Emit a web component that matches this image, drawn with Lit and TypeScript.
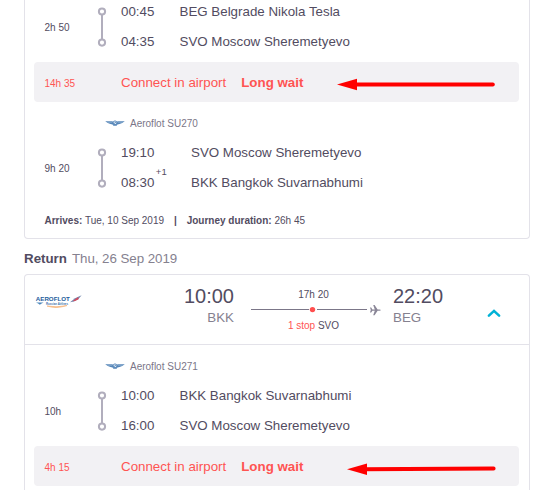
import { LitElement, html, css, svg, nothing } from "lit";
import { customElement, property } from "lit/decorators.js";

interface Stop {
  time: string;
  place: string;
  plus?: string;
}

const wings = html`<svg class="wings" width="20" height="8" viewBox="0 0 20 8">
  <path d="M0.2 2.2 L7.2 2.3 L8.6 3 L11.4 3 L12.8 2.3 L19.8 2.2 L17.2 3.9 L14.6 5 L12.4 5.6 L11.6 6.8 L8.4 6.8 L7.6 5.6 L5.4 5 L2.8 3.9 Z" fill="#5585b8" />
  <path d="M2.5 3.3H7.4M12.6 3.3H17.5" stroke="#a9c4df" stroke-width=".5" />
  <circle cx="10" cy="3.8" r="1.9" fill="#dfeaf4" stroke="#5585b8" stroke-width=".9" />
  <path d="M9 4.8L11 2.8" stroke="#3d72aa" stroke-width=".8" />
</svg>`;

@customElement("flight-segment")
export class FlightSegment extends LitElement {
  @property() duration = "";
  @property() flight = "";
  @property({ attribute: false }) stops: Stop[] = [];
  @property({ type: Boolean, reflect: true }) wide = false;

  static styles = css`
    :host { display: block; }
    .airline { display: flex; align-items: center; height: 20px; margin-bottom: 5px; padding-left: 80px; gap: 5px; font-size: 10px; color: #7b7688; }
    .wings { display: block; }
    .body { display: grid; grid-template-columns: 52px 25px 1fr; padding-left: 19px; height: 60px; align-items: center; color: #524c61; }
    .dur { font-size: 10px; padding: 1px 0 0 0.5px; }
    .track { display: block; }
    .row { display: grid; grid-template-columns: 58.5px 1fr; align-items: center; height: 30px; line-height: 30px; white-space: nowrap; }
    :host([wide]) .row { grid-template-columns: 70px 1fr; }
    .time { display: flex; }
    .plus { font-size: 9.5px; line-height: 12px; margin: -2px 0 0 1.5px; }
  `;

  render() {
    return html`
      ${this.flight ? html`<div class="airline">${wings}<span>${this.flight}</span></div>` : nothing}
      <div class="body">
        <span class="dur">${this.duration}</span>
        <svg class="track" width="14" height="46" viewBox="0 0 14 46">
          <g fill="#fff" stroke="#b1aebd" stroke-width="2">
            <path d="M6 10V36" />
            <circle cx="6" cy="7.5" r="3.1" />
            <circle cx="6" cy="38.6" r="3.1" />
          </g>
        </svg>
        <div>
          ${this.stops.map(
            (s) => html`<div class="row">
              <span class="time">${s.time}${s.plus ? html`<span class="plus">${s.plus}</span>` : nothing}</span>
              <span>${s.place}</span>
            </div>`
          )}
        </div>
      </div>
    `;
  }
}

@customElement("wait-bar")
export class WaitBar extends LitElement {
  @property() duration = "";
  @property({ type: Number }) tip = 0;
  @property({ type: Number }) rise = 0;

  static styles = css`
    :host { display: block; padding: 0 10px 0 9px; }
    .bar { position: relative; display: grid; grid-template-columns: 77px auto auto 1fr; align-items: center; height: 40px; padding-left: 10px; border-radius: 4px; background: #f2f1f4; color: #ff5452; white-space: nowrap; }
    .dur { font-size: 10px; padding: 2px 0 0 0.5px; }
    .long { margin-left: 15px; }
    .arrow { position: absolute; left: 300px; top: 12px; }
  `;

  render() {
    const t = this.tip;
    const y = 10.5 + this.rise;
    return html`<div class="bar">
      <span class="dur">${this.duration}</span>
      <span>Connect in airport</span>
      <b class="long">Long wait</b>
      <svg class="arrow" width="170" height="24" viewBox="0 0 170 24">
        ${svg`<path d=${`M${t + 16} ${y}L${this.rise ? 159.6 : 158.8} ${y - this.rise}`} stroke="#f00" stroke-width="4" stroke-linecap="round" />
        <path d=${`M${t} ${y}L${t + 20} ${y - 5.8}V${y + 5.8}Z`} fill="#f00" />`}
      </svg>
    </div>`;
  }
}

@customElement("app-root")
export class AppRoot extends LitElement {
  static styles = css`
    :host { display: block; height: 490px; overflow: hidden; background: #fff; font-family: "Liberation Sans", Arial, sans-serif; font-size: 13.33px; color: #524c61; }
    .page { width: 506px; margin-left: 24px; }
    .card { display: flow-root; box-sizing: border-box; border: 1px solid #e3e2e9; border-radius: 4px; }
    .outbound { height: 239px; border-top: 0; border-top-left-radius: 0; border-top-right-radius: 0; }
    .first { margin-bottom: 5px; margin-top: -3px; }
    .spaced { padding-top: 11px; }
    .summary { display: flex; height: 20px; align-items: center; margin-top: 12px; padding-left: 19.5px; font-size: 10px; white-space: pre; }
    .sep { margin: 0 9.8px 0 10px; }
    .title { display: flex; align-items: center; height: 35px; padding-top: 3px; box-sizing: border-box; gap: 5px; }
    .date { color: #85818f; letter-spacing: -0.05px; }
    .return { height: 226px; border-bottom: 0; border-bottom-left-radius: 0; border-bottom-right-radius: 0; }
    .head { box-sizing: border-box; height: 70px; display: grid; grid-template-columns: 52px 157px 17px 130px 12px 94px auto; padding-top: 9px; border-bottom: 1px solid #e3e2e9; }
    .logo { display: block; margin: 9px 0 0 10px; }
    .point { line-height: 24px; }
    .right { text-align: right; }
    .clock { font-size: 20px; }
    .code { line-height: 20px; color: #85818f; }
    .route { display: flex; flex-direction: column; font-size: 10px; line-height: 15px; padding-top: 3px; }
    .label { width: 125px; text-align: center; }
    .red { color: #ff5452; }
    .path { display: block; margin: 2px 0 0; }
    .chevron { display: block; margin-top: 23px; }
    .leg { padding: 11px 0 5px; }
  `;

  render() {
    return html`<div class="page">
      <section class="card outbound">
        <flight-segment class="first" .duration=${"2h 50"} .stops=${[
          { time: "00:45", place: "BEG Belgrade Nikola Tesla" },
          { time: "04:35", place: "SVO Moscow Sheremetyevo" },
        ]}></flight-segment>
        <wait-bar .duration=${"14h 35"} .tip=${3}></wait-bar>
        <flight-segment class="spaced" wide .duration=${"9h 20"} .flight=${"Aeroflot SU270"} .stops=${[
          { time: "19:10", place: "SVO Moscow Sheremetyevo" },
          { time: "08:30", place: "BKK Bangkok Suvarnabhumi", plus: "+1" },
        ]}></flight-segment>
        <div class="summary"><b>Arrives:</b> Tue, 10 Sep 2019<b class="sep">|</b><b>Journey duration:</b> 26h 45</div>
      </section>

      <div class="title"><b>Return</b><span class="date">Thu, 26 Sep 2019</span></div>

      <section class="card return">
        <header class="head">
          <svg class="logo" width="48" height="20" viewBox="0 0 48 20">
            <text x="0.8" y="8.4" font-size="5.8" font-weight="bold" fill="#1d5c9b" textLength="34" lengthAdjust="spacingAndGlyphs">AEROFLOT</text>
            <text x="11" y="12.3" font-size="2.8" font-weight="bold" fill="#3c72ac" textLength="22" lengthAdjust="spacingAndGlyphs">Russian Airlines</text>
            <path d="M1 9.6H8.6L6.6 10.5L4.8 11.7L3.2 10.5Z" fill="#4d87bb" />
            <path d="M35 9.2L40 5.2L46.6 2.2L43.5 6L39 8.6Z" fill="#7389b0" />
            <path d="M37.5 8.3L43.2 4.1L43.6 6.2L40 8Z" fill="#d8485a" />
            <path d="M12 13Q21 16.2 32 12.5Q22 14.8 12 13Z" fill="#f5ae70" stroke="#f5ae70" stroke-width=".6" />
          </svg>
          <div class="point right"><div class="clock">10:00</div><div class="code">BKK</div></div>
          <span></span>
          <div class="route">
            <div class="label">17h 20</div>
            <svg class="path" width="130" height="14" viewBox="0 0 130 14">
              <path d="M0 5.5H58M66 5.5H116" stroke="#7b7688" />
              <circle cx="61.5" cy="5.6" r="2.7" fill="#ff4f4f" />
              <path d="M119 3.6h1.2l1.2 1.8h2.4L122.2 1h1.4l3 4.4h1.9q1.3.1 1.3.7t-1.3.7h-1.9l-3 4.4h-1.4l1.6-4.4h-2.4l-1.2 1.8H119l.8-2.5Z" fill="#8a8697" />
            </svg>
            <div class="label"><span class="red">1 stop</span> SVO</div>
          </div>
          <span></span>
          <div class="point"><div class="clock">22:20</div><div class="code">BEG</div></div>
          <svg class="chevron" width="14" height="12" viewBox="0 0 14 12">
            <path d="M1.9 8.6L7 3.9L12.1 8.6" fill="none" stroke="#00b2d6" stroke-width="2.6" stroke-linecap="round" />
          </svg>
        </header>
        <flight-segment class="leg" .duration=${"10h"} .flight=${"Aeroflot SU271"} .stops=${[
          { time: "10:00", place: "BKK Bangkok Suvarnabhumi" },
          { time: "16:00", place: "SVO Moscow Sheremetyevo" },
        ]}></flight-segment>
        <wait-bar .duration=${"4h 15"} .tip=${13} .rise=${0.7}></wait-bar>
      </section>
    </div>`;
  }
}
